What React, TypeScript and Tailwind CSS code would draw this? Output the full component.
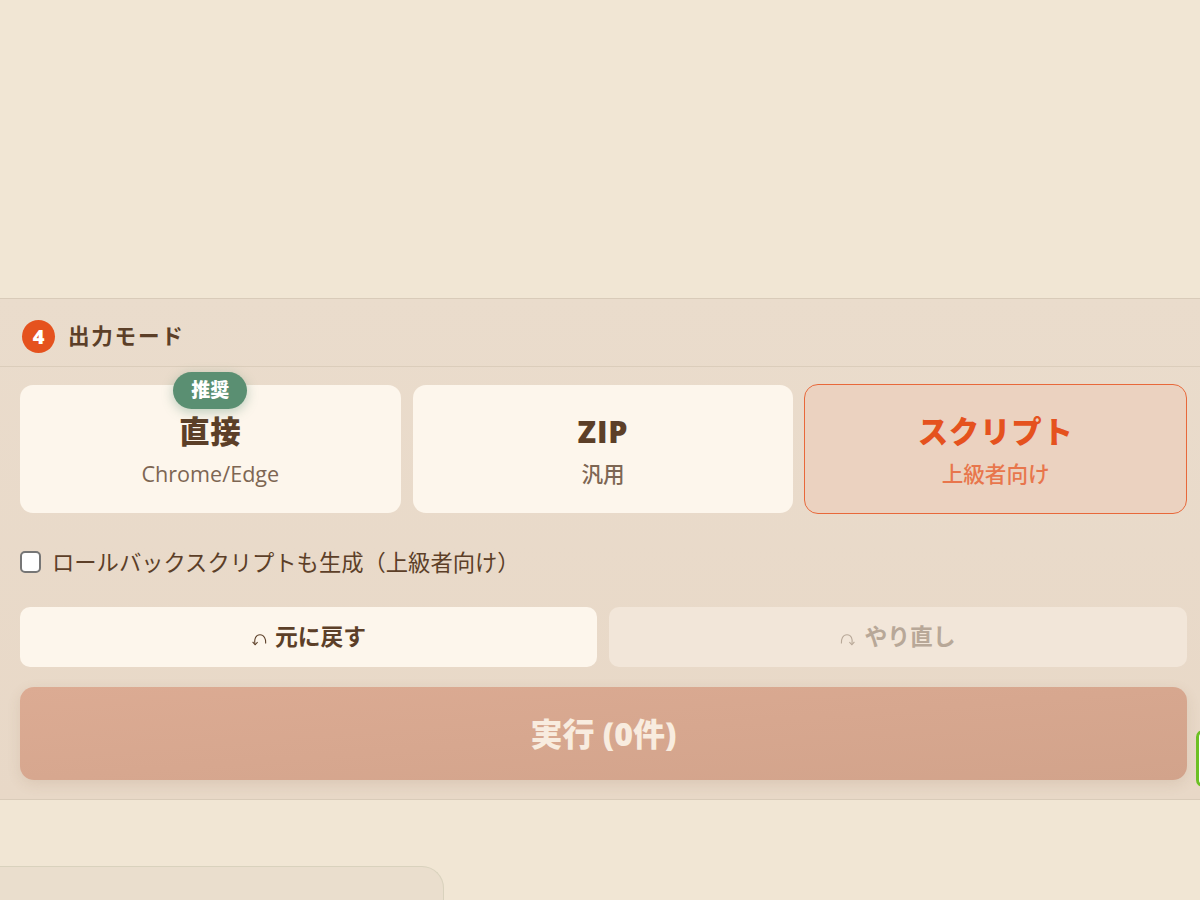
const jp = "font-['Open_Sans','Noto_Sans_CJK_JP',sans-serif]"

function ModeCard({ title, sub, active, badge }: { title: string; sub: string; active?: boolean; badge?: boolean }) {
  return (
    <div
      className={`relative flex h-[130px] flex-col items-center justify-center rounded-[14px] border bg-clip-padding pt-[3px] ${
        active ? 'border-[#e8683a] bg-[#ebd2c0]' : 'border-transparent bg-[#fdf6ec]'
      }`}
    >
      {badge && (
        <span className="absolute left-1/2 top-[-13px] flex h-[37px] w-[74px] -translate-x-1/2 items-center justify-center rounded-full bg-[#5a8f72] text-[19px] font-extrabold text-white shadow-[0_3px_12px_rgba(90,143,114,0.4)]">
          推奨
        </span>
      )}
      <div className={`text-[30.4px] font-extrabold leading-[40px] tracking-[0.8px] ${active ? 'text-[#e5521e]' : 'text-[#5c3f28]'}`}>{title}</div>
      <div className={`mt-[7px] text-[21.6px] font-medium leading-[30px] ${active ? 'text-[#e8764c]' : 'text-[#7d6653]'}`}>{sub}</div>
    </div>
  )
}

function ActionButton({ label, disabled, redo }: { label: string; disabled?: boolean; redo?: boolean }) {
  return (
    <div
      className={`flex h-[60px] items-center justify-center gap-[8px] rounded-[10px] text-[22.8px] font-bold ${
        disabled ? 'bg-[#f2e6d9] text-[#b8a898]' : 'bg-[#fdf6ec] text-[#5c3f28]'
      }`}
    >
      <svg
        width="16"
        height="14"
        viewBox="0 0 16 14"
        fill="none"
        stroke="currentColor"
        strokeWidth="1.1"
        className={`mt-[5px] ${redo ? '-scale-x-100' : ''}`}
      >
        <path d="M4 11C3 6 4.8 1.8 9 1.8S15 6 14.6 10.5" />
        <path d="M1.6 8.8L4.1 11.8L6.6 9.2" />
      </svg>
      <span>{label}</span>
    </div>
  )
}

export default function App() {
  return (
    <div className={`relative h-[900px] overflow-hidden bg-[#f1e6d4] ${jp}`}>
      <div className="h-[298px]" />

      {/* Output mode panel */}
      <section className="h-[502px] border-y border-[#d9cbb9] bg-gradient-to-b from-[#eadccc] to-[#e8d8c7]">
        <div className="flex h-[68px] items-center gap-[13px] border-b border-[#dbcdbb] pl-[22px] pt-[8px]">
          <span className="flex h-[33px] w-[33px] items-center justify-center rounded-full bg-[#e5521e] text-[20px] font-extrabold text-white">4</span>
          <h2 className="text-[21.6px] font-bold tracking-[1.7px] text-[#5c3f28]">出力モード</h2>
        </div>

        <div className="pl-[20px] pr-[13px] pt-[17px]">
          <div className="ml-[-1px] grid grid-cols-3 gap-[10px]">
            <ModeCard title="直接" sub="Chrome/Edge" badge />
            <ModeCard title="ZIP" sub="汎用" />
            <ModeCard title="スクリプト" sub="上級者向け" active />
          </div>

          <label className="mt-[37px] flex h-[22px] items-center gap-[11px] text-[22.3px] text-[#5c3f28]">
            <span className="h-[22px] w-[21px] rounded-[5px] border-2 border-[#767676] bg-white" />
            <span className="pt-[2px]">ロールバックスクリプトも生成（上級者向け）</span>
          </label>

          <div className="mt-[34px] grid grid-cols-[577px_1fr] gap-[12px]">
            <ActionButton label="元に戻す" />
            <ActionButton label="やり直し" disabled redo />
          </div>

          <div className="mt-[20px] flex h-[93px] items-center justify-center rounded-[14px] bg-gradient-to-br from-[#dcab93] to-[#d2a38b] text-[32px] font-extrabold text-[#f8ecdf] shadow-[0_4px_14px_rgba(120,80,50,0.12)]">
            実行 (0件)
          </div>
        </div>
      </section>

      {/* Bottom card, cut off by the window */}
      <div className="mt-[66px] h-[60px] w-[444px] rounded-tr-[22px] border-r border-t border-[#d9d2bd] bg-[#eadecd]" />

      <div className="absolute left-[1196px] top-[730px] h-[57px] w-[20px] rounded-[7px] border-[3px] border-[#6cc024] bg-white" />
    </div>
  )
}
